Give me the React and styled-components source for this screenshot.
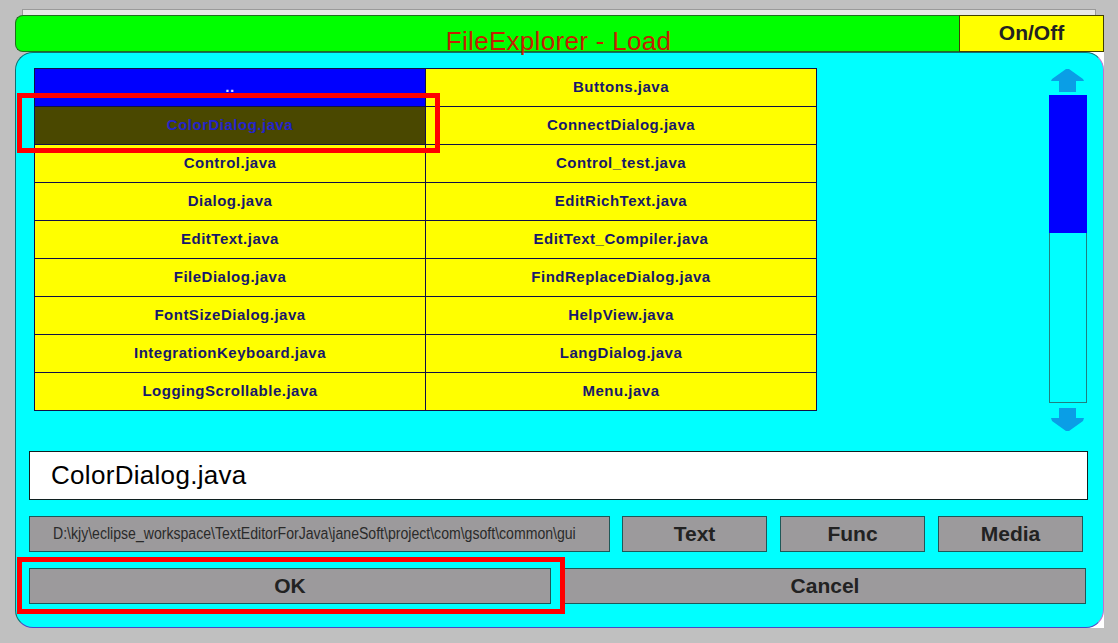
import React from "react";
import styled, { createGlobalStyle } from "styled-components";

const Global = createGlobalStyle`
  html, body { margin: 0; padding: 0; background: #c0c0c0; }
  body { font-family: "Liberation Sans", Arial, sans-serif; }
  * { box-sizing: border-box; }
`;

const Screen = styled.div`
  position: relative;
  width: 1118px;
  height: 643px;
  padding: 9px 0 0 15px;
  background: #c0c0c0;
`;

const BackStrip = styled.div`
  margin-left: 7px;
  width: 1074px;
  height: 6px;
  background: #e8e8e8;
  border: 1px solid #9a9a9a;
  border-bottom: none;
`;

const TitleRow = styled.div`
  display: flex;
  width: 1089px;
  height: 37px;
`;

const TitleBar = styled.div`
  flex: 1;
  background: #00ff00;
  border: 1px solid #207020;
  border-right: none;
  border-radius: 8px 0 0 8px;
  display: flex;
  justify-content: center;
  align-items: flex-end;
  overflow: visible;
`;

const TitleText = styled.span`
  font-size: 26px;
  letter-spacing: 0.3px;
  color: #c42000;
  line-height: 26px;
  margin-left: 142px;
  margin-bottom: -3px;
  position: relative;
  z-index: 2;
`;

const Toggle = styled.div`
  width: 145px;
  background: #ffff00;
  border: 1px solid #404000;
  display: flex;
  justify-content: center;
  align-items: center;
  font-weight: 700;
  font-size: 21px;
  color: #222;
  padding-bottom: 2px;
`;

const PanelWrap = styled.div`
  width: 1089px;
  height: 576px;
  background: linear-gradient(to right, transparent calc(100% - 22px), #ffffff calc(100% - 22px));
`;

const Panel = styled.div`
  width: 100%;
  height: 100%;
  background: #00ffff;
  border-left: 1px solid #107070;
  border-top: 1px solid #107070;
  border-right: 1px solid #c070d0;
  border-bottom: 1px solid #4848c8;
  border-radius: 18px;
  padding: 15px 0 0 13px;
  display: flex;
  flex-direction: column;
`;

const TopArea = styled.div`
  display: flex;
  height: 364px;
`;

const Table = styled.div`
  margin-left: 5px;
  display: grid;
  grid-template-columns: 391px 391px;
  grid-auto-rows: 38px;
  border-top: 1px solid #101048;
  border-left: 1px solid #101048;
  align-self: flex-start;
`;

const Cell = styled.div`
  border-right: 1px solid #101048;
  border-bottom: 1px solid #101048;
  background: ${(p) => (p.$kind === "up" ? "#0000ff" : p.$kind === "sel" ? "#4a4800" : "#ffff00")};
  color: ${(p) => (p.$kind === "up" ? "#e0e0ff" : p.$kind === "sel" ? "#2424c8" : "#18186a")};
  font-weight: 700;
  font-size: 15px;
  letter-spacing: 0.5px;
  display: flex;
  align-items: center;
  justify-content: center;
  padding-bottom: 2px;
`;

const ScrollCol = styled.div`
  margin-left: 232px;
  width: 38px;
  display: flex;
  flex-direction: column;
  align-items: center;
`;

const Arrow = styled.svg`
  display: block;
  width: 35px;
  height: 24px;
  margin-left: ${(p) => (p.$down ? "-2px" : "-1px")};
`;

const Track = styled.div`
  margin: 3px 0 5px;
  width: 38px;
  height: 308px;
  border: 1px solid #208080;
  display: flex;
  flex-direction: column;
`;

const Thumb = styled.div`
  margin: -1px -1px 0;
  background: #0000ff;
`;

const NameInput = styled.div`
  margin-top: 19px;
  width: 1059px;
  height: 49px;
  background: #ffffff;
  border: 1px solid #102020;
  padding-left: 21px;
  display: flex;
  align-items: center;
  font-size: 26px;
  letter-spacing: 0.3px;
  color: #000;
  padding-bottom: 1px;
`;

const ToolRow = styled.div`
  margin-top: 16px;
  display: flex;
  height: 36px;
`;

const GrayBox = styled.div`
  width: ${(p) => p.$w}px;
  margin-left: ${(p) => p.$ml || 0}px;
  height: 36px;
  background: #9c9a9c;
  border: 1px solid #1e5858;
  display: flex;
  align-items: center;
  justify-content: center;
  color: #222;
  font-weight: 700;
  font-size: 21px;
`;

const PathBox = styled(GrayBox)`
  justify-content: flex-start;
  padding-left: 23px;
  overflow: hidden;
`;

const PathText = styled.span`
  display: inline-block;
  font-weight: 400;
  font-size: 16px;
  color: #2a2a2a;
  white-space: nowrap;
  transform: scaleX(0.88);
  transform-origin: left center;
`;

const BottomRow = styled.div`
  margin-top: 16px;
  display: flex;
  height: 36px;
`;

const Highlight = styled.div`
  position: absolute;
  left: ${(p) => p.$x}px;
  top: ${(p) => p.$y}px;
  width: ${(p) => p.$w}px;
  height: ${(p) => p.$h}px;
  border: 5px solid #ff0000;
  pointer-events: none;
`;

const files = [
  "..", "Buttons.java",
  "ColorDialog.java", "ConnectDialog.java",
  "Control.java", "Control_test.java",
  "Dialog.java", "EditRichText.java",
  "EditText.java", "EditText_Compiler.java",
  "FileDialog.java", "FindReplaceDialog.java",
  "FontSizeDialog.java", "HelpView.java",
  "IntegrationKeyboard.java", "LangDialog.java",
  "LoggingScrollable.java", "Menu.java",
];

const ARROW = "#0a9ee6";

function UpArrow() {
  return (
    <Arrow viewBox="0 0 35 24">
      <path d="M9 24 V13 H1 L2 11 L16 1 H19 L33 11 L34 13 H26 V24 Z" fill={ARROW} />
    </Arrow>
  );
}

function DownArrow() {
  return (
    <Arrow $down viewBox="0 0 35 24">
      <path d="M9 0 V10 H1 L2 13 L16 23 H19 L33 13 L34 10 H26 V0 Z" fill={ARROW} />
    </Arrow>
  );
}

export default function App() {
  return (
    <>
      <Global />
      <Screen>
        <BackStrip />
        <TitleRow>
          <TitleBar>
            <TitleText>FileExplorer - Load</TitleText>
          </TitleBar>
          <Toggle>On/Off</Toggle>
        </TitleRow>
        <PanelWrap>
          <Panel>
            <TopArea>
              <Table>
                {files.map((f, i) => (
                  <Cell key={f} $kind={i === 0 ? "up" : i === 2 ? "sel" : "file"}>
                    {f}
                  </Cell>
                ))}
              </Table>
              <ScrollCol>
                <UpArrow />
                <Track>
                  <Thumb style={{ height: `${(139 / 308) * 100}%` }} />
                </Track>
                <DownArrow />
              </ScrollCol>
            </TopArea>
            <NameInput>ColorDialog.java</NameInput>
            <ToolRow>
              <PathBox $w={581}>
                <PathText>
                  D:\kjy\eclipse_workspace\TextEditorForJava\janeSoft\project\com\gsoft\common\gui
                </PathText>
              </PathBox>
              <GrayBox $w={145} $ml={12}>Text</GrayBox>
              <GrayBox $w={145} $ml={13}>Func</GrayBox>
              <GrayBox $w={145} $ml={13}>Media</GrayBox>
            </ToolRow>
            <BottomRow>
              <GrayBox $w={522}>OK</GrayBox>
              <GrayBox $w={522} $ml={13}>Cancel</GrayBox>
            </BottomRow>
          </Panel>
        </PanelWrap>
        <Highlight $x={17} $y={93} $w={423} $h={60} />
        <Highlight $x={17} $y={557} $w={548} $h={57} />
      </Screen>
    </>
  );
}
